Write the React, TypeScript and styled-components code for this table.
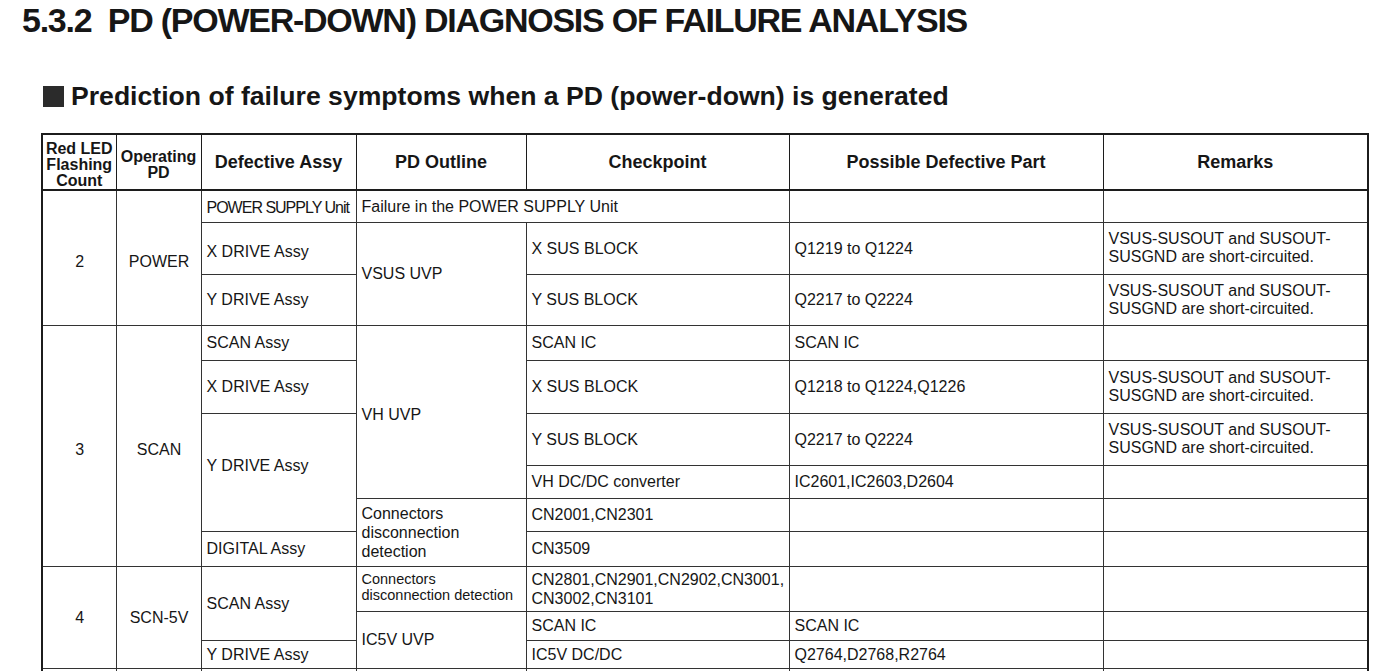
import React from 'react';
import styled, { createGlobalStyle } from 'styled-components';

const GlobalStyle = createGlobalStyle`
  html, body {
    margin: 0;
    padding: 0;
    background: #fff;
    overflow: hidden;
  }
  body {
    font-family: "Liberation Sans", Arial, sans-serif;
    color: #161616;
  }
`;

const Page = styled.div`
  display: flex;
  flex-direction: column;
  padding-top: 1px;
`;

const Title = styled.h1`
  margin: 0 0 0 22px;
  font-size: 34px;
  line-height: 38px;
  font-weight: bold;
  letter-spacing: -1.25px;
  white-space: pre;
`;

const Subtitle = styled.h2`
  display: flex;
  align-items: center;
  gap: 7px;
  margin: 42px 0 0 43px;
  font-size: 26.6px;
  line-height: 30px;
  font-weight: bold;
`;

const Square = styled.span`
  display: block;
  width: 21px;
  height: 21px;
  background: #2b2b2b;
`;

const Table = styled.table`
  margin: 22px 0 0 41px;
  width: 1326px;
  table-layout: fixed;
  border-collapse: collapse;
  border: 2px solid #1c1c1c;
`;

const Col = styled.col<{ $w: number }>`
  width: ${p => p.$w}px;
`;

const Row = styled.tr<{ $h: number }>`
  height: ${p => p.$h}px;
`;

const HeadCell = styled.th<{ $small?: boolean }>`
  border: 1px solid #1c1c1c;
  border-bottom: 2px solid #1c1c1c;
  padding: ${p => (p.$small ? '6px 2px 0' : '0 2px')};
  font-size: ${p => (p.$small ? '16px' : '18px')};
  line-height: ${p => (p.$small ? '16px' : '20px')};
  font-weight: bold;
  text-align: center;
  vertical-align: middle;
`;

const Cell = styled.td<{ $center?: boolean; $small?: boolean; $tight?: boolean; $lower?: number }>`
  border: 1px solid #333;
  padding: ${p => (p.$lower ?? 0) > 0 ? `${p.$lower}px 4px 0 5px` : `0 4px ${-(p.$lower ?? 0)}px 5px`};
  font-size: ${p => (p.$small ? '14.5px' : '16px')};
  line-height: ${p => (p.$small ? '16px' : '19px')};
  letter-spacing: ${p => (p.$tight ? '-1px' : 'normal')};
  text-align: ${p => (p.$center ? 'center' : 'left')};
  vertical-align: middle;
  white-space: nowrap;
`;

const RemarkCell = styled(Cell)`
  line-height: 18px;
`;

const widths = [74, 85, 155, 170, 263, 314, 265];

const remark = (
  <>
    VSUS-SUSOUT and SUSOUT-
    <br />
    SUSGND are short-circuited.
  </>
);

export default function App() {
  return (
    <Page>
      <GlobalStyle />
      <Title>{'5.3.2  PD (POWER-DOWN) DIAGNOSIS OF FAILURE ANALYSIS'}</Title>
      <Subtitle>
        <Square />
        Prediction of failure symptoms when a PD (power-down) is generated
      </Subtitle>
      <Table>
        <colgroup>
          {widths.map((w, i) => (
            <Col key={i} $w={w} />
          ))}
        </colgroup>
        <thead>
          <Row $h={54}>
            <HeadCell $small>
              Red LED
              <br />
              Flashing
              <br />
              Count
            </HeadCell>
            <HeadCell $small>
              Operating
              <br />
              PD
            </HeadCell>
            <HeadCell>Defective Assy</HeadCell>
            <HeadCell>PD Outline</HeadCell>
            <HeadCell>Checkpoint</HeadCell>
            <HeadCell>Possible Defective Part</HeadCell>
            <HeadCell>Remarks</HeadCell>
          </Row>
        </thead>
        <tbody>
          <Row $h={32}>
            <Cell $center $lower={8} rowSpan={3}>2</Cell>
            <Cell $center $lower={8} rowSpan={3}>POWER</Cell>
            <Cell $tight $lower={2}>POWER SUPPLY Unit</Cell>
            <Cell colSpan={2}>Failure in the POWER SUPPLY Unit</Cell>
            <Cell />
            <Cell />
          </Row>
          <Row $h={52}>
            <Cell $lower={6}>X DRIVE Assy</Cell>
            <Cell rowSpan={2}>VSUS UVP</Cell>
            <Cell>X SUS BLOCK</Cell>
            <Cell>Q1219 to Q1224</Cell>
            <RemarkCell>{remark}</RemarkCell>
          </Row>
          <Row $h={51}>
            <Cell>Y DRIVE Assy</Cell>
            <Cell>Y SUS BLOCK</Cell>
            <Cell>Q2217 to Q2224</Cell>
            <RemarkCell>{remark}</RemarkCell>
          </Row>

          <Row $h={35}>
            <Cell $center $lower={7} rowSpan={6}>3</Cell>
            <Cell $center $lower={7} rowSpan={6}>SCAN</Cell>
            <Cell>SCAN Assy</Cell>
            <Cell $lower={6} rowSpan={4}>VH UVP</Cell>
            <Cell>SCAN IC</Cell>
            <Cell>SCAN IC</Cell>
            <Cell />
          </Row>
          <Row $h={53}>
            <Cell>X DRIVE Assy</Cell>
            <Cell>X SUS BLOCK</Cell>
            <Cell>Q1218 to Q1224,Q1226</Cell>
            <RemarkCell>{remark}</RemarkCell>
          </Row>
          <Row $h={52}>
            <Cell $lower={-14} rowSpan={3}>Y DRIVE Assy</Cell>
            <Cell>Y SUS BLOCK</Cell>
            <Cell>Q2217 to Q2224</Cell>
            <RemarkCell>{remark}</RemarkCell>
          </Row>
          <Row $h={33}>
            <Cell>VH DC/DC converter</Cell>
            <Cell>IC2601,IC2603,D2604</Cell>
            <Cell />
          </Row>
          <Row $h={33}>
            <Cell rowSpan={2}>
              Connectors
              <br />
              disconnection
              <br />
              detection
            </Cell>
            <Cell>CN2001,CN2301</Cell>
            <Cell />
            <Cell />
          </Row>
          <Row $h={35}>
            <Cell>DIGITAL Assy</Cell>
            <Cell>CN3509</Cell>
            <Cell />
            <Cell />
          </Row>

          <Row $h={45}>
            <Cell $center rowSpan={3}>4</Cell>
            <Cell $center rowSpan={3}>SCN-5V</Cell>
            <Cell rowSpan={2}>SCAN Assy</Cell>
            <Cell $small $lower={-4}>
              Connectors
              <br />
              disconnection detection
            </Cell>
            <Cell>
              CN2801,CN2901,CN2902,CN3001,
              <br />
              CN3002,CN3101
            </Cell>
            <Cell />
            <Cell />
          </Row>
          <Row $h={29}>
            <Cell rowSpan={2}>IC5V UVP</Cell>
            <Cell>SCAN IC</Cell>
            <Cell>SCAN IC</Cell>
            <Cell />
          </Row>
          <Row $h={28}>
            <Cell>Y DRIVE Assy</Cell>
            <Cell>IC5V DC/DC</Cell>
            <Cell>Q2764,D2768,R2764</Cell>
            <Cell />
          </Row>
          <Row $h={40}>
            <Cell />
            <Cell />
            <Cell />
            <Cell />
            <Cell />
            <Cell />
            <Cell />
          </Row>
        </tbody>
      </Table>
    </Page>
  );
}
